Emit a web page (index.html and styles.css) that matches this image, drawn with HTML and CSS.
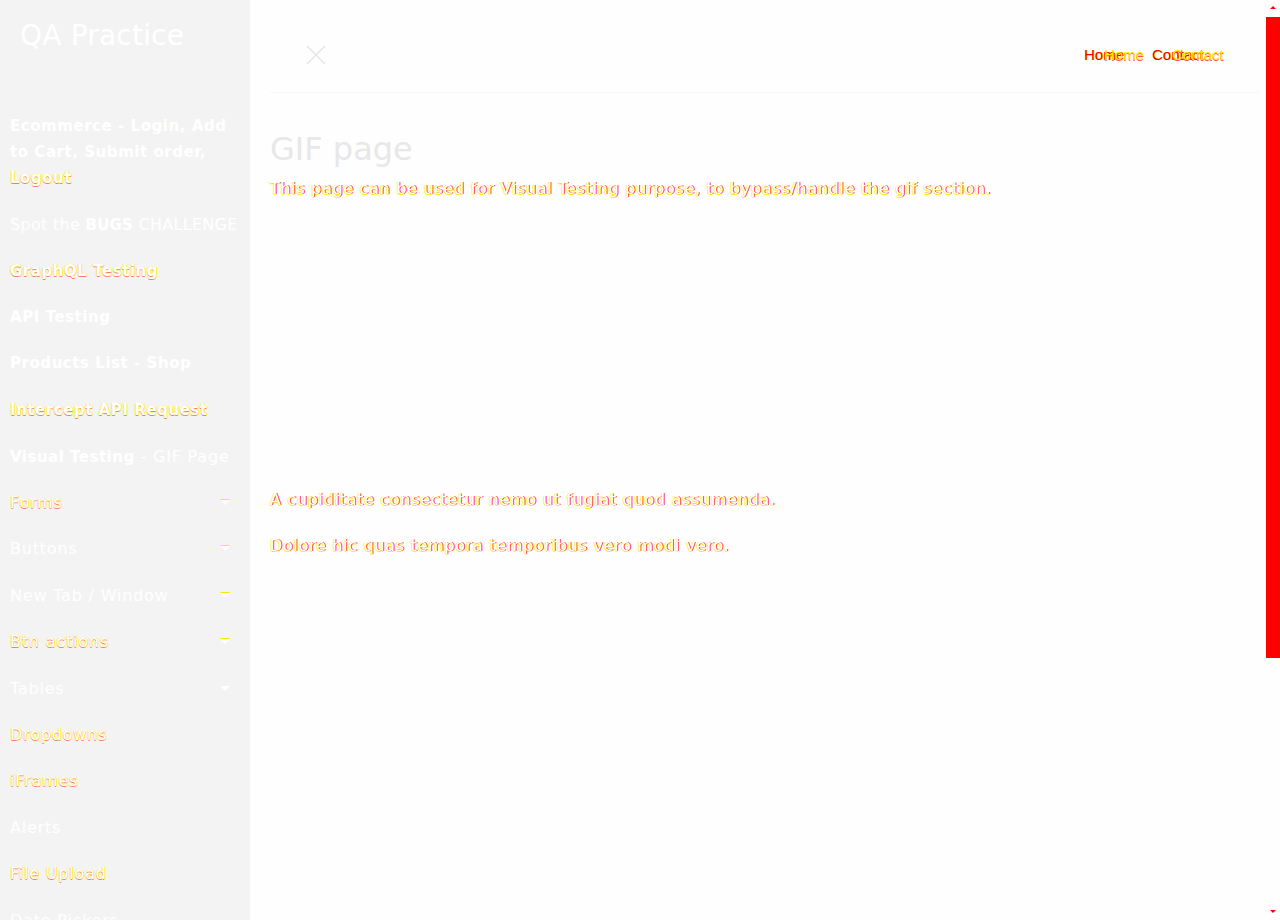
FILE: index.html
```html
<!DOCTYPE html>
<html lang="en">
<head>
<meta charset="utf-8">
<title>GIF page</title>
<link rel="stylesheet" href="styles.css">
</head>
<body>
<div class="app">
  <aside class="sidebar">
    <div class="brand">QA Practice</div>
    <nav class="menu">
      <a class="item bold tall">Ecommerce - Login, Add to Cart, Submit order, <span class="diffc">Logout</span></a>
      <a class="item spot"><span>Spot the <b>BUGS</b> CHALLENGE</span></a>
      <a class="item bold diffc">GraphQL Testing</a>
      <a class="item bold">API Testing</a>
      <a class="item bold">Products List - Shop</a>
      <a class="item bold diffc">Intercept API Request</a>
      <a class="item"><span><b>Visual Testing</b> - GIF Page</span></a>
      <a class="item drop diffc"><span>Forms</span><span class="caret"></span></a>
      <a class="item drop"><span>Buttons</span><span class="caret"></span></a>
      <a class="item drop"><span>New Tab / Window</span><span class="caret"></span></a>
      <a class="item drop diffc"><span>Btn actions</span><span class="caret"></span></a>
      <a class="item drop"><span>Tables</span><span class="caret plain"></span></a>
      <a class="item diffc">Dropdowns</a>
      <a class="item diffc">iFrames</a>
      <a class="item">Alerts</a>
      <a class="item diffc">File Upload</a>
      <a class="item">Date Pickers</a>
    </nav>
  </aside>
  <main class="main">
    <header class="topbar">
      <svg class="close" width="20" height="20" viewBox="0 0 20 20"><path d="M1 1L19 19M19 1L1 19" stroke="#e6e6e6" stroke-width="1.6" fill="none"/></svg>
      <div class="links">
        <span class="layer a"><span>Home</span><span>Contact</span></span>
        <span class="layer b"><span>Home</span><span>Contact</span></span>
      </div>
    </header>
    <section class="content">
      <h1 class="title">GIF page</h1>
      <p class="lead diffm">This page can be used for Visual Testing purpose, to bypass/handle the gif section.</p>
      <div class="gif"></div>
      <p class="para diffm">A cupiditate consectetur nemo ut fugiat quod assumenda.</p>
      <p class="para diffm">Dolore hic quas tempora temporibus vero modi vero.</p>
    </section>
  </main>
  <div class="scroll">
    <span class="arrow up"></span>
    <div class="thumb"></div>
    <div class="track"></div>
    <span class="arrow down"></span>
  </div>
</div>
</body>
</html>
```
FILE: styles.css
```css
* { box-sizing: border-box; }
html, body { margin: 0; padding: 0; height: 100%; overflow: hidden; }
body {
  font-family: "DejaVu Sans", "Open Sans", sans-serif;
  background: #fefefe;
  color: #fff;
}
.app { display: flex; height: 920px; }
.sidebar {
  width: 250px;
  flex: none;
  background: #f3f3f3;
  padding: 16px 0 0 0;
  overflow: hidden;
}
.brand {
  font-size: 28px;
  font-weight: 400;
  padding-left: 20px;
  line-height: 40px;
  letter-spacing: 0.2px;
  color: #fff;
}
.menu { display: flex; flex-direction: column; margin-top: 58px; }
.item {
  display: flex;
  align-items: center;
  justify-content: space-between;
  padding: 0 20px 0 10px;
  height: 46.4px;
  font-size: 16px;
  letter-spacing: 0.8px;
  color: #fff;
  white-space: nowrap;
}
.item.spot { letter-spacing: 0.3px; }
.item.spot b { letter-spacing: 0.2px; }
.item.bold { font-size: 15px; font-weight: 700; letter-spacing: 0.55px; }
.item.tall {
  display: block;
  white-space: normal;
  height: auto;
  line-height: 26px;
  padding: 1px 4px 10px 10px;
  margin-top: -2px;
}
.item b { font-weight: 700; font-size: 15px; letter-spacing: 0.5px; }
.diffc {
  color: #fff;
  text-shadow: 1px 0 rgba(255,232,0,0.8), 0 1px rgba(255,0,0,0.5), -1px 0 rgba(255,232,0,0.5);
}
.diffm {
  color: #fff;
  text-shadow: 1px 0 rgba(255,0,0,0.85), 0 1px rgba(255,232,0,0.9), -1px 0 rgba(255,232,0,0.6);
}
.caret {
  width: 0; height: 0;
  border-left: 5px solid transparent;
  border-right: 5px solid transparent;
  border-top: 5px solid #fff;
  filter: drop-shadow(0 -1px 0 #ffe800);
}
.caret.plain { filter: none; }
.main { flex: 1; display: flex; flex-direction: column; padding: 0 5px 0 20px; }
.topbar {
  height: 93px;
  border-bottom: 1px solid #f7f7f7;
  display: flex;
  align-items: center;
  justify-content: space-between;
  padding: 18px 0 0 36px;
}
.links {
  position: relative;
  width: 144px;
  height: 20px;
  margin-right: 32px;
  font-family: "Liberation Sans", sans-serif;
  font-size: 15px;
  line-height: 20px;
}
.layer { position: absolute; top: 0; display: flex; gap: 28px; }
.layer.a { left: 0; color: #e00; text-shadow: 1px 0 #ffe800; }
.layer.b { left: 20px; color: #ffe800; text-shadow: 0 1px rgba(255,0,0,0.7); }
.content { padding-top: 34px; }
.title {
  margin: 0;
  font-size: 32px;
  font-weight: 400;
  color: #e8e8e8;
  line-height: 44px;
}
.lead { margin: 4px 0 0; font-size: 16px; line-height: 28px; letter-spacing: 0.7px; }
.gif { height: 283px; }
.para { margin: 0 0 18px; font-size: 16px; line-height: 28px; letter-spacing: 0.7px; }
.scroll {
  width: 15px;
  flex: none;
  display: flex;
  flex-direction: column;
  align-items: center;
  background: #fefefe;
}
.arrow { width: 0; height: 0; border-left: 3px solid transparent; border-right: 3px solid transparent; }
.arrow.up { border-bottom: 3px solid #f00; margin: 6px 0 8px; }
.arrow.down { border-top: 3px solid #f00; margin: 6px 0 7px; }
.thumb { width: 14px; height: 641px; background: #f00; align-self: flex-end; }
.track { flex: 1; }
```
